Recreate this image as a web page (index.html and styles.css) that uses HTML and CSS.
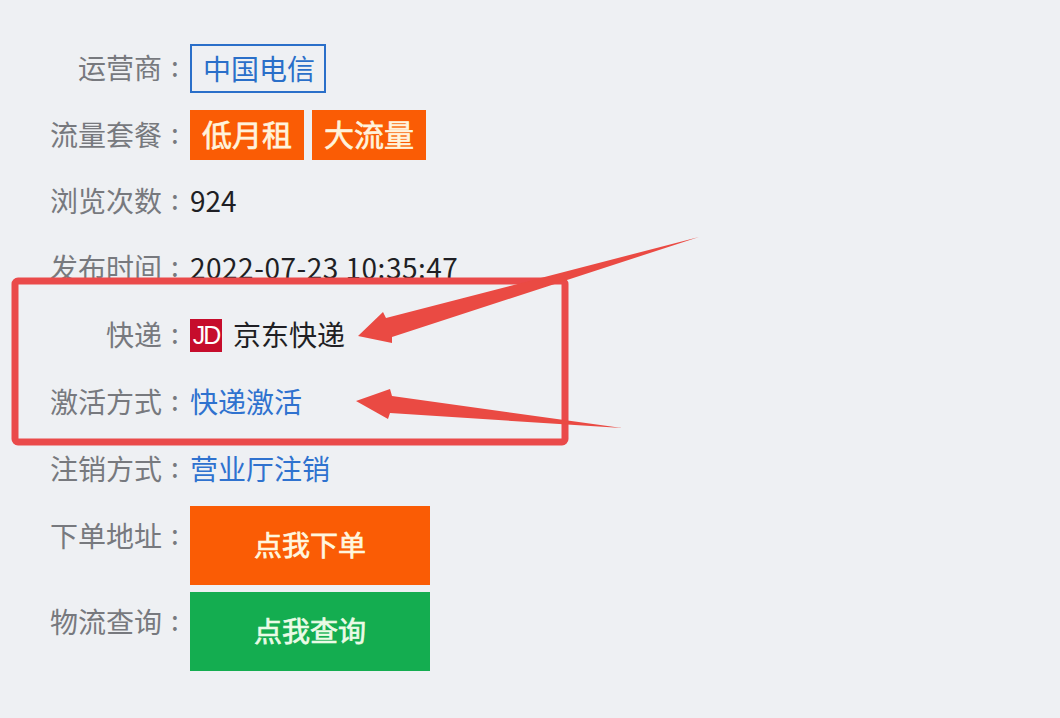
FILE: index.html
```html
<!DOCTYPE html>
<html lang="zh">
<head>
<meta charset="utf-8">
<title>套餐详情</title>
<link rel="stylesheet" href="styles.css">
</head>
<body>
<main class="page">
  <dl class="list">
    <div class="row"><dt>运营商</dt><dd><span class="tag tag-line">中国电信</span></dd></div>
    <div class="row"><dt>流量套餐</dt><dd class="tags"><span class="tag tag-fill">低月租</span><span class="tag tag-fill">大流量</span></dd></div>
    <div class="row"><dt>浏览次数</dt><dd class="val">924</dd></div>
    <div class="row"><dt>发布时间</dt><dd class="val date">2022-07-23 10:35:47</dd></div>
    <div class="row"><dt>快递</dt><dd class="courier"><span class="jd">JD</span><span class="val">京东快递</span></dd></div>
    <div class="row"><dt>激活方式</dt><dd class="val link">快递激活</dd></div>
    <div class="row"><dt>注销方式</dt><dd class="val link">营业厅注销</dd></div>
    <div class="row row-btn"><dt>下单地址</dt><dd><a class="btn btn-orange">点我下单</a></dd></div>
    <div class="row row-btn"><dt>物流查询</dt><dd><a class="btn btn-green">点我查询</a></dd></div>
  </dl>
  <svg class="marks" width="1060" height="718" viewBox="0 0 1060 718" aria-hidden="true">
    <rect class="frame" x="15" y="281" width="550" height="161" rx="3"/>
    <polygon class="arrow" points="699,237 386,318 383,312 358,336 392,343 392,337"/>
    <polygon class="arrow" points="622,428 392,396 390,389 356,401 388,419 390,413"/>
  </svg>
</main>
</body>
</html>
```

FILE: styles.css
```css
html, body {
  margin: 0;
  padding: 0;
}

body {
  background: #eef0f3;
  font-family: "Noto Sans CJK SC", "Noto Sans", sans-serif;
  font-size: 28px;
  color: #1f1f24;
}

.page {
  position: relative;
  width: 1060px;
  height: 718px;
  overflow: hidden;
}

.list {
  margin: 0;
  padding: 35px 0 0;
  display: flex;
  flex-direction: column;
}

.row {
  display: flex;
  align-items: center;
  height: 66.8px;
}

.row dt {
  width: 162px;
  padding-bottom: 3px;
  text-align: right;
  color: #77797e;
  white-space: nowrap;
  position: relative;
}

.row dt::after {
  content: ":";
  position: absolute;
  left: 171px;
  top: -2px;
}

.row dd {
  margin: 0 0 0 28px;
  white-space: nowrap;
}

.val {
  padding-bottom: 3px;
}

.date {
  letter-spacing: 0.5px;
}

.tags {
  display: flex;
  gap: 8px;
}

.tag {
  display: block;
  padding: 0 10px;
}

.tag-line {
  border: 2px solid #2a6fc9;
  color: #2a6fc9;
  line-height: 45px;
  padding-left: 11px;
  padding-right: 9px;
}

.tag-fill {
  background: #fa5c05;
  color: #fff3dc;
  font-size: 30px;
  -webkit-text-stroke: 0.7px #fff3dc;
  line-height: 46px;
  height: 50px;
  width: 94px;
  text-align: center;
}

.courier {
  display: flex;
  align-items: center;
  gap: 11px;
}

.jd {
  width: 32px;
  height: 33px;
  background: #c60d2c;
  color: #fff;
  font-family: "Liberation Sans", sans-serif;
  font-size: 25px;
  line-height: 33px;
  text-align: center;
  letter-spacing: -2px;
}

.link {
  color: #2f72cf;
}

.row-btn {
  height: 79px;
  align-items: flex-start;
  margin-bottom: 7px;
}

.row-btn:nth-child(8) {
  margin-top: 3px;
}

.row-btn dt {
  margin-top: 9px;
  padding-bottom: 0;
}

.btn {
  display: block;
  width: 240px;
  height: 79px;
  line-height: 77px;
  text-align: center;
  font-size: 28px;
  -webkit-text-stroke: 0.7px currentColor;
  color: #fff6df;
}

.btn-orange {
  background: #fa5c05;
}

.btn-green {
  background: #14ad50;
  color: #eafbe6;
}

.marks {
  position: absolute;
  left: 0;
  top: 0;
}

.frame {
  fill: none;
  stroke: #ea4a4a;
  stroke-width: 7;
}

.arrow {
  fill: #ea4a43;
}
```
